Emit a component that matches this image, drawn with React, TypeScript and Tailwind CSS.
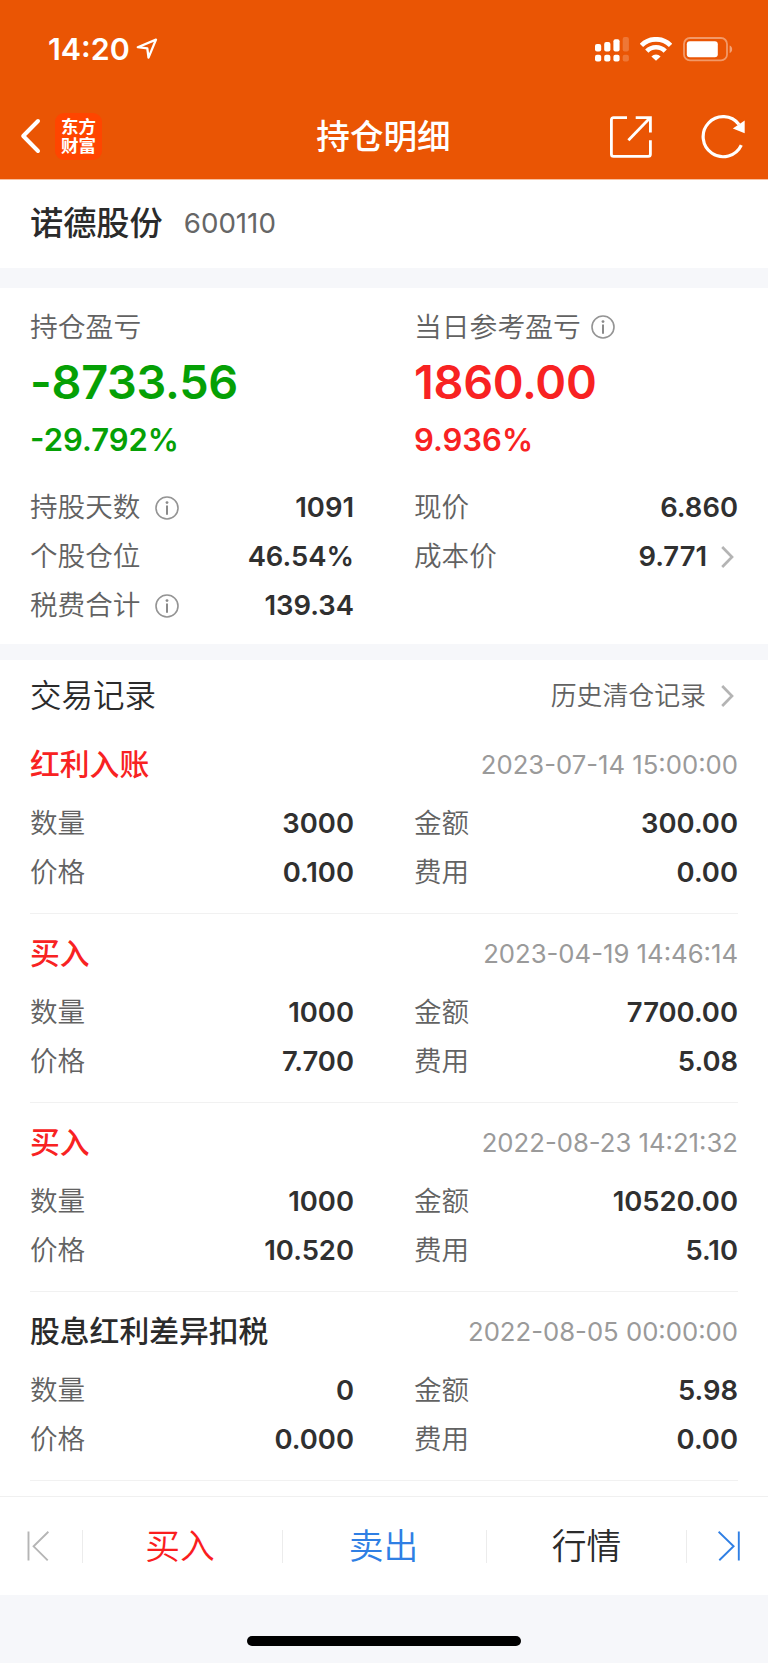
import React from 'react';

type Tone = 'up' | 'down' | 'plain';

interface TradeRecord {
  id: number;
  title: string;
  tone: Tone;
  time: string;
  quantity: string;
  amount: string;
  price: string;
  fee: string;
}

const records: TradeRecord[] = [
  { id: 1, title: '红利入账', tone: 'up', time: '2023-07-14 15:00:00', quantity: '3000', amount: '300.00', price: '0.100', fee: '0.00' },
  { id: 2, title: '买入', tone: 'up', time: '2023-04-19 14:46:14', quantity: '1000', amount: '7700.00', price: '7.700', fee: '5.08' },
  { id: 3, title: '买入', tone: 'up', time: '2022-08-23 14:21:32', quantity: '1000', amount: '10520.00', price: '10.520', fee: '5.10' },
  { id: 4, title: '股息红利差异扣税', tone: 'plain', time: '2022-08-05 00:00:00', quantity: '0', amount: '5.98', price: '0.000', fee: '0.00' },
];

const toneClass: Record<Tone, string> = {
  up: 'text-[#f82222]',
  down: 'text-[#05a005]',
  plain: 'text-[#2b2b2b]',
};

/* Icons */

const InfoIcon: React.FC<{ className?: string }> = ({ className }) => (
  <svg className={className} width="24" height="24" viewBox="0 0 24 24" fill="none">
    <circle cx="12" cy="12" r="11" stroke="#949494" strokeWidth="1.6" />
    <circle cx="12" cy="6.6" r="1.4" fill="#8a8a8a" />
    <path d="M12 9.6V18.8" stroke="#8a8a8a" strokeWidth="2" />
  </svg>
);

const ChevronIcon: React.FC = () => (
  <svg className="mr-[4px]" width="13" height="22" viewBox="0 0 13 22" fill="none">
    <path d="M1.2 1L11 11L1.2 21" stroke="#b4b4b4" strokeWidth="2.7" />
  </svg>
);

const LocationIcon: React.FC = () => (
  <svg width="22" height="22" viewBox="0 0 22 22" fill="none">
    <path d="M1.8 9.2L20 1.6L12.5 19.6L11.3 10.4Z" stroke="white" strokeWidth="2.3" strokeLinejoin="round" />
  </svg>
);

const SignalIcon: React.FC = () => (
  <svg width="34" height="25" viewBox="0 0 34 25" fill="white">
    <rect x="0" y="7" width="6.2" height="7.4" rx="2" />
    <rect x="9.2" y="5" width="6.2" height="9.4" rx="2" />
    <rect x="18.4" y="2.3" width="6.2" height="12.1" rx="2" />
    <rect x="27.7" y="0" width="6.2" height="14.4" rx="2" opacity="0.2" />
    <rect x="0" y="17.8" width="6.2" height="6.6" rx="2" />
    <rect x="9.2" y="17.8" width="6.2" height="6.6" rx="2" />
    <rect x="18.4" y="17.8" width="6.2" height="6.6" rx="2" />
    <rect x="27.7" y="17.8" width="6.2" height="6.6" rx="2" opacity="0.2" />
  </svg>
);

const WifiIcon: React.FC = () => (
  <svg width="32" height="24" viewBox="0 0 32 24" fill="none">
    <path d="M1.4 8.4A20.6 20.6 0 0 1 30.6 8.4" stroke="white" strokeWidth="4.8" />
    <path d="M6.8 14.1A12.8 12.8 0 0 1 25.2 14.1" stroke="white" strokeWidth="4.6" />
    <path d="M16 23.8L11.4 19.4A6.3 6.3 0 0 1 20.6 19.4Z" fill="white" />
  </svg>
);

const BatteryIcon: React.FC = () => (
  <svg width="50" height="25" viewBox="0 0 50 25" fill="none">
    <rect x="1" y="1" width="43" height="22.4" rx="6" stroke="white" strokeOpacity="0.4" strokeWidth="1.8" />
    <rect x="3.8" y="4.2" width="31" height="16" rx="3" fill="white" />
    <path d="M46.6 8.4C50 9.6 50 14.8 46.6 16Z" fill="white" fillOpacity="0.45" />
  </svg>
);

const BackIcon: React.FC = () => (
  <svg width="21" height="36" viewBox="0 0 21 36" fill="none">
    <path d="M18 3L3.2 18L18 33" stroke="white" strokeWidth="4" strokeLinecap="round" strokeLinejoin="round" />
  </svg>
);

const ShareIcon: React.FC = () => (
  <svg width="42" height="42" viewBox="0 0 42 42" fill="none" stroke="white" strokeWidth="2.8">
    <path d="M17 1.6H3.6Q1.4 1.6 1.4 3.8V38.2Q1.4 40.4 3.6 40.4H38.2Q40.4 40.4 40.4 38.2V24.2" />
    <path d="M25.7 1.6H40.4V16.6" />
    <path d="M39.4 2.6L18.4 24.2" />
  </svg>
);

const RefreshIcon: React.FC = () => (
  <svg width="46" height="44" viewBox="0 0 46 44" fill="none">
    <path d="M40.3 30.1A20 20 0 1 1 38 9.5" stroke="white" strokeWidth="3.2" />
    <path d="M43.7 5.6V18.2L31.8 13.6Z" fill="white" />
  </svg>
);

const FirstIcon: React.FC = () => (
  <svg width="22" height="30" viewBox="0 0 22 30" fill="none" stroke="#b5b5b5" strokeWidth="1.9">
    <path d="M1.5 .5V29.5M21.4 .8L6.6 15.3L20.7 29.3" />
  </svg>
);

const LastIcon: React.FC = () => (
  <svg width="22" height="30" viewBox="0 0 22 30" fill="none" stroke="#2f7fe4" strokeWidth="1.9">
    <path d="M20.8 .5V29.5M.6 .8L15.6 15.3L1.3 29.3" />
  </svg>
);

/* Building blocks */

interface FieldProps {
  label: string;
  value: string;
  info?: boolean;
  link?: boolean;
}

const Field: React.FC<FieldProps> = ({ label, value, info, link }) => (
  <div className="flex h-[49px] items-center justify-between">
    <span className="flex items-center text-[27.6px] font-[350] text-[#626262]">
      <span className="pt-[1px]">{label}</span>
      {info && <InfoIcon className="ml-[15px]" />}
    </span>
    <span className="flex items-center gap-[14px] text-[27.4px] font-semibold text-[#303030]">
      {value}
      {link && <ChevronIcon />}
    </span>
  </div>
);

const Record: React.FC<{ record: TradeRecord }> = ({ record }) => (
  <div className="h-[189px] border-b border-[#f1f1f1] pt-[20px]">
    <div className="mb-[14px] flex h-[40px] items-center justify-between">
      <span className={`text-[29.8px] font-medium ${toneClass[record.tone]}`}>{record.title}</span>
      <span className="text-[25.7px] text-[#9a9a9a]">{record.time}</span>
    </div>
    <div className="grid grid-cols-2 gap-x-[60px]">
      <Field label="数量" value={record.quantity} />
      <Field label="金额" value={record.amount} />
      <Field label="价格" value={record.price} />
      <Field label="费用" value={record.fee} />
    </div>
  </div>
);

interface ProfitProps {
  label: string;
  amount: string;
  percent: string;
  tone: Tone;
  info?: boolean;
}

const Profit: React.FC<ProfitProps> = ({ label, amount, percent, tone, info }) => (
  <div>
    <div className="flex h-[40px] items-center text-[27.8px] font-[350] text-[#626262]">
      <span className="pt-[2px]">{label}</span>
      {info && <InfoIcon className="ml-[10px]" />}
    </div>
    <div className={`flex h-[70px] items-center pt-[1px] text-[46.8px] font-semibold tracking-[-0.3px] ${toneClass[tone]}`}>{amount}</div>
    <div className={`flex h-[44px] items-center text-[31px] font-semibold ${toneClass[tone]}`}>{percent}</div>
  </div>
);

const Separator: React.FC = () => <div className="h-[33px] w-px bg-[#ececec]" />;

const App: React.FC = () => {
  return (
    <div className="flex h-[1663px] w-[768px] flex-col overflow-hidden bg-white font-['Inter','Noto_Sans_CJK_SC',sans-serif] leading-none whitespace-nowrap">
      {/* Status bar and navigation */}
      <header className="h-[180px] border-b border-[#f8bf9f] bg-[#ea5504] text-white">
        <div className="flex h-[92px] items-center justify-between pt-[6px] pr-[35px] pl-[48px]">
          <div className="flex items-center gap-[6px]">
            <span className="text-[30.4px] font-semibold">14:20</span>
            <LocationIcon />
          </div>
          <div className="flex items-center gap-[11px]">
            <SignalIcon />
            <WifiIcon />
            <BatteryIcon />
          </div>
        </div>
        <div className="grid h-[88px] grid-cols-3 items-center pr-[21px] pl-[20px]">
          <div className="flex items-center gap-[14px]">
            <BackIcon />
            <div className="flex h-[47px] w-[47px] flex-col items-center justify-center rounded-[9px] bg-[#ff4500] pb-[1px] text-[17.5px] leading-[19px] font-bold">
              <span>东方</span>
              <span>财富</span>
            </div>
          </div>
          <h1 className="pt-[2px] text-center text-[33.6px] font-medium">持仓明细</h1>
          <div className="flex items-center justify-end gap-[49px] pt-[2px]">
            <ShareIcon />
            <RefreshIcon />
          </div>
        </div>
      </header>

      {/* Stock name */}
      <section className="flex h-[88px] items-center gap-[21px] px-[30px]">
        <span className="text-[33.2px] font-medium text-[#2b2b2b]">诺德股份</span>
        <span className="text-[27.7px] text-[#666]">600110</span>
      </section>
      <div className="h-[20px] bg-[#f6f7fa]" />

      {/* Position summary */}
      <section className="h-[356px] px-[30px] pt-[19px]">
        <div className="grid grid-cols-2 gap-x-[60px]">
          <Profit label="持仓盈亏" amount="-8733.56" percent="-29.792%" tone="down" />
          <Profit label="当日参考盈亏" amount="1860.00" percent="9.936%" tone="up" info />
        </div>
        <div className="mt-[22px] grid grid-cols-2 gap-x-[60px]">
          <Field label="持股天数" value="1091" info />
          <Field label="现价" value="6.860" />
          <Field label="个股仓位" value="46.54%" />
          <Field label="成本价" value="9.771" link />
          <Field label="税费合计" value="139.34" info />
        </div>
      </section>
      <div className="h-[16px] bg-[#f6f7fa]" />

      {/* Trade records */}
      <section className="h-[836px] px-[30px]">
        <div className="flex h-[65px] items-center justify-between pt-[6px]">
          <h2 className="pt-[1px] text-[31.5px] font-[350] text-[#2b2b2b]">交易记录</h2>
          <span className="flex items-center gap-[15px] text-[25.9px] font-[350] text-[#626262]">
            <span className="pt-[1px]">历史清仓记录</span>
            <ChevronIcon />
          </span>
        </div>
        {records.map(record => (
          <Record key={record.id} record={record} />
        ))}
      </section>

      {/* Bottom actions */}
      <nav className="flex h-[99px] items-center border-t border-[#f0f0f0] text-[34.8px] font-[350]">
        <div className="flex w-[82px] justify-start pl-[27px]">
          <FirstIcon />
        </div>
        <Separator />
        <button className="w-[199px] pr-[5px] text-[#fa1e1e]">买入</button>
        <Separator />
        <button className="w-[203px] pr-[2px] text-[#2f7fe4]">卖出</button>
        <Separator />
        <button className="flex-1 text-[#2b2b2b]">行情</button>
        <Separator />
        <div className="flex w-[81px] justify-end pr-[28px]">
          <LastIcon />
        </div>
      </nav>

      {/* Home indicator */}
      <footer className="flex flex-1 justify-center bg-[#f6f7fa] pt-[41px]">
        <div className="h-[10px] w-[274px] rounded-full bg-black" />
      </footer>
    </div>
  );
};

export default App;
